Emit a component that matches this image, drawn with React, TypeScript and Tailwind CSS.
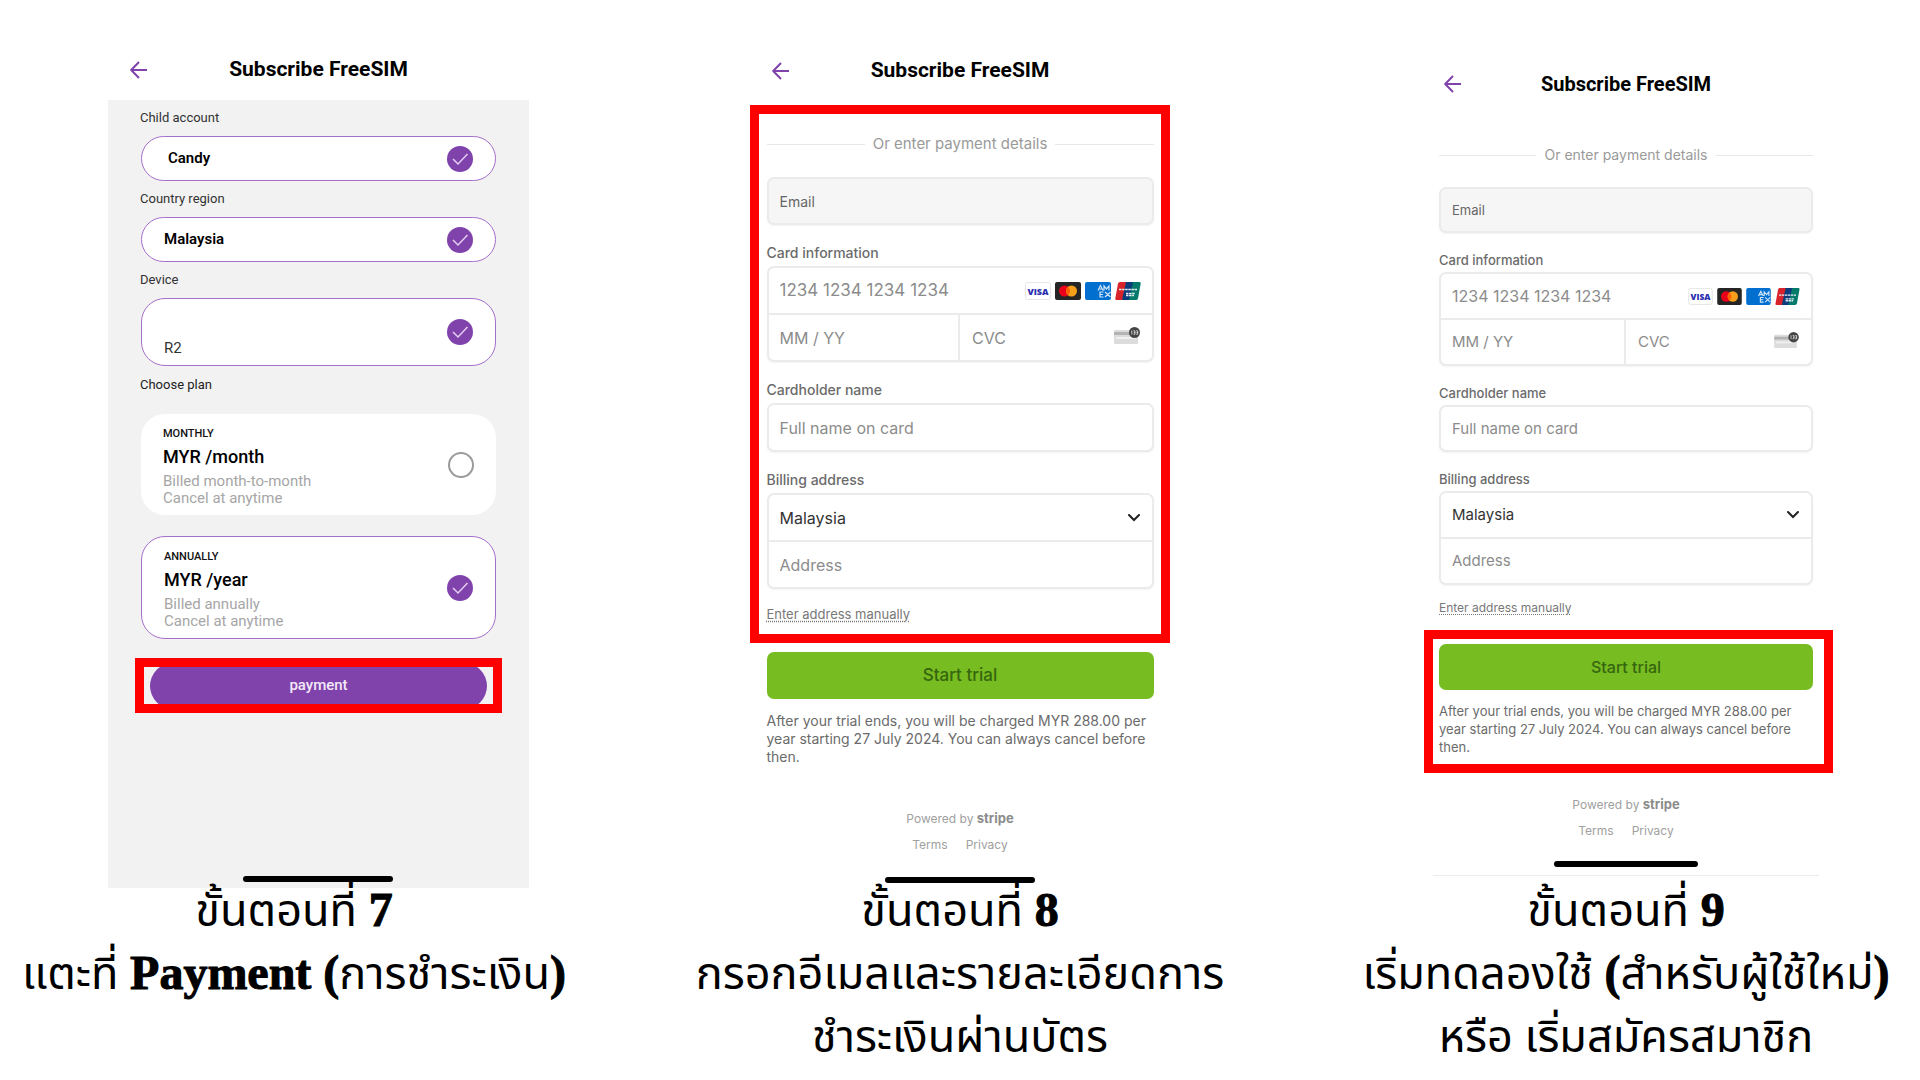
import { useId, type ReactNode } from "react";
import clsx from "clsx";

function BackArrow() {
  return (
    <svg viewBox="0 0 18 18" className="size-[18px]" fill="none" stroke="#8043ab" strokeWidth="2">
      <path d="M17 9H1.5M9 1L1.2 9L9 17" strokeLinejoin="round" />
    </svg>
  );
}

function CheckMark() {
  return (
    <svg viewBox="0 0 26 26" className="size-[26px] shrink-0">
      <circle cx="13" cy="13" r="13" fill="#8043ab" />
      <path d="M6 13L11 18L20.5 8" fill="none" stroke="#e3cdf2" strokeWidth="1.5" />
    </svg>
  );
}

function Chevron() {
  return (
    <svg viewBox="0 0 12 8" className="h-2 w-3" fill="none" stroke="#222" strokeWidth="2">
      <path d="M1 1L6 6L11 1" strokeLinecap="round" />
    </svg>
  );
}

function CardBrands({ small }: { small: boolean }) {
  const size = small ? "h-[17px] w-[25px]" : "h-[18px] w-[26px]";
  return (
    <div className="flex shrink-0 gap-1">
      <svg viewBox="0 0 26 18" className={size}>
        <rect x="0.5" y="0.5" width="25" height="17" rx="2" fill="#fff" stroke="#e6e6e6" />
        <text x="13" y="12.5" textAnchor="middle" fontSize="9" fontWeight="800" fill="#2a2fb0" fontFamily="Open Sans, sans-serif">
          VISA
        </text>
      </svg>
      <svg viewBox="0 0 26 18" className={size}>
        <rect width="26" height="18" rx="2" fill="#252525" />
        <circle cx="9.5" cy="9" r="5.5" fill="#eb001b" />
        <circle cx="16.5" cy="9" r="5.5" fill="#f79e1b" />
        <path d="M13 4.8a5.5 5.5 0 0 1 0 8.4a5.5 5.5 0 0 1 0-8.4" fill="#ff5f00" />
      </svg>
      <svg viewBox="0 0 26 18" className={size}>
        <rect width="26" height="18" rx="2" fill="#016fd0" />
        <path
          d="M13 8.500L15.500 3.500L18 8.500M14 7H17M19 8.500V4L21.500 7L24 4V8.500M18.500 10H15V15H18.500M15 12.500H18M20 10L25.500 15M25.500 10L20 15"
          fill="none"
          stroke="#cfe4f7"
          strokeWidth="1.200"
        />
      </svg>
      <svg viewBox="0 0 26 18" className={size}>
        <path d="M5 0H12L8 18H1.500Q0 18 0.300 16.500L3 1.500Q3.500 0 5 0" fill="#d8232a" />
        <path d="M11 0H19L15 18H7Z" fill="#0c3c7c" />
        <path d="M18 0H24.500Q26 0 25.700 1.500L23 16.500Q22.500 18 21 18H14Z" fill="#047a6b" />
        <path d="M4 7.500H22M11 11.500H20M11 13.500H19" stroke="#e6eef2" strokeWidth="1.500" strokeDasharray="2.500 0.600" />
      </svg>
    </div>
  );
}

function CvcIcon({ small }: { small: boolean }) {
  return (
    <svg viewBox="0 0 26 18" className={clsx("mb-[3px] shrink-0", small ? "h-[17px] w-[25px]" : "h-[18px] w-[26px]")}>
      <rect y="3" width="24" height="14" rx="1" fill="#dcdcdc" />
      <rect y="5" width="24" height="3" fill="#b3b3b3" />
      <rect x="2" y="10" width="20" height="2" fill="#f0f0f0" />
      <circle cx="20.500" cy="5.500" r="5.500" fill="#444" />
      <path d="M17.800 3.500V7.500M19.500 3.800H21V7.200H19.500M21 5.500H19.800M22.200 3.800H23.700V7.200H22.200M23.700 5.500H22.500" fill="none" stroke="#fff" strokeWidth="0.700" />
    </svg>
  );
}

function ScreenHeader({ small = false }: { small?: boolean }) {
  return (
    <header className="grid h-11 grid-cols-[1fr_auto_1fr] items-center font-[Roboto,sans-serif]">
      <button type="button" aria-label="Back" className="justify-self-start">
        <BackArrow />
      </button>
      <h2 className={clsx("font-bold text-black", small ? "text-[20px]" : "text-[21px]")}>Subscribe FreeSIM</h2>
    </header>
  );
}

function HomeBar({ className }: { className: string }) {
  return <div className={clsx("mx-auto h-[6px] rounded-full bg-black", className)} />;
}

interface PickedFieldProps {
  label: string;
  value: string;
  boxClass: string;
  inputClass: string;
}

function PickedField({ label, value, boxClass, inputClass }: PickedFieldProps) {
  const id = useId();
  return (
    <div>
      <label htmlFor={id} className="block text-[13px] leading-5 text-[#333]">
        {label}
      </label>
      <div className={clsx("mt-2 ml-px flex items-center rounded-[24px] border border-[#a56fca] bg-white pr-[22px]", boxClass)}>
        <input id={id} readOnly value={value} className={clsx("min-w-0 flex-1 outline-none", inputClass)} />
        <CheckMark />
      </div>
    </div>
  );
}

interface PlanProps {
  tag: string;
  price: string;
  billing: string;
  selected?: boolean;
}

function Plan({ tag, price, billing, selected = false }: PlanProps) {
  return (
    <label
      className={clsx(
        "ml-px flex items-center rounded-[24px] bg-white pt-[13px] pr-[22px] pb-2 pl-[22px]",
        selected && "border border-[#a56fca]",
      )}
    >
      <span className="flex-1">
        <span className="block text-[11px] leading-[14px] font-medium text-[#111]">{tag}</span>
        <span className="block text-[18px] leading-8 font-medium text-black">{price}</span>
        <span className="block text-[15px] leading-[17px] text-[#a6a6a6]">{billing}</span>
        <span className="block text-[15px] leading-[17px] text-[#a6a6a6]">Cancel at anytime</span>
      </span>
      <input type="radio" name="plan" defaultChecked={selected} className="peer sr-only" />
      <span className="mb-[5px] size-[26px] rounded-full border-2 border-[#9b9b9b] peer-checked:hidden" />
      <span className="mb-[5px] hidden peer-checked:block">
        <CheckMark />
      </span>
    </label>
  );
}

function PlanScreen() {
  return (
    <section className="ml-[86px] w-[421px] max-w-full pt-[48px] font-[Roboto,sans-serif]">
      <div className="px-[22px]">
        <ScreenHeader />
      </div>
      <div className="mt-2 bg-[#f2f2f2] pt-2 pr-[33px] pb-[6px] pl-8">
        <div className="flex flex-col gap-2">
          <PickedField label="Child account" value="Candy" boxClass="h-[45px]" inputClass="pl-[26px] text-[15px] font-semibold" />
          <PickedField label="Country region" value="Malaysia" boxClass="h-[45px]" inputClass="pl-[22px] text-[15px] font-semibold" />
          <PickedField label="Device" value="R2" boxClass="h-[68px]" inputClass="pt-8 pl-[22px] text-[15px] text-[#333]" />
        </div>
        <h3 className="mt-[9px] text-[13px] leading-5 text-[#222]">Choose plan</h3>
        <div className="mt-[19px] flex flex-col gap-[21px]">
          <Plan tag="MONTHLY" price="MYR /month" billing="Billed month-to-month" />
          <Plan tag="ANNUALLY" price="MYR /year" billing="Billed annually" selected />
        </div>
        <div className="-mr-[6px] -ml-[5px] mt-[19px] flex h-[55px] items-center overflow-hidden border-[9px] border-[#ff0000] px-[6px]">
          <button type="button" className="h-[46px] w-full shrink-0 rounded-full bg-[#8043ab] text-[15px] font-medium text-[#f3e9fa]">
            payment
          </button>
        </div>
        <HomeBar className="mt-[163px] w-[150px]" />
      </div>
    </section>
  );
}

const FIELD = "w-full min-w-0 flex-1 bg-transparent outline-none placeholder:text-[#8c8c8c]";
const BOX = "border-2 border-[#ebebeb] bg-white shadow-xs";

function Highlight({ className }: { className: string }) {
  return <div className={clsx("pointer-events-none absolute border-[9px] border-[#ff0000]", className)} />;
}

interface CheckoutScreenProps {
  small?: boolean;
  highlight: "form" | "submit";
}

function CheckoutScreen({ small = false, highlight }: CheckoutScreenProps) {
  const id = useId();
  const label = clsx("block leading-5 font-medium text-[#6b6b6b]", small ? "mt-[17px] text-[13px]" : "mt-[18px] text-[14px]");
  const group = clsx("flex flex-col rounded-[7px]", BOX, small ? "mt-[2px] h-[94px] text-[15px]" : "mt-[3px] h-24 text-[16px]");
  const width = small ? "w-[374px] pt-[62px]" : "w-[387px] pt-[49px]";

  return (
    <section className={clsx("mx-auto max-w-full font-[Inter,sans-serif] text-[#6b6b6b]", width)}>
      <div className="px-[5px]">
        <ScreenHeader small={small} />
      </div>

      <div className={clsx("relative", small ? "mt-[39px]" : "mt-[41px]")}>
        {highlight === "form" && <Highlight className="-top-[29px] -right-[16px] -bottom-[19px] -left-[17px]" />}
        <div className={clsx("flex items-center gap-2 leading-5 text-[#9a9a9a]", small ? "text-[14px]" : "text-[15px]")}>
          <hr className="flex-1 border-[#e8e8e8]" />
          Or enter payment details
          <hr className="flex-1 border-[#e8e8e8]" />
        </div>

        <input
          type="email"
          aria-label="Email"
          placeholder="Email"
          className={clsx(
            "block w-full rounded-[7px] border-2 border-[#ebebeb] bg-[#f6f6f6] px-[11px] shadow-xs outline-none placeholder:text-[#666]",
            small ? "mt-[22px] h-[46px] text-[13px]" : "mt-[23px] h-12 text-[14px]",
          )}
        />

        <label htmlFor={`${id}-card`} className={label}>
          Card information
        </label>
        <div className={group}>
          <div className="flex flex-1 items-center border-b-2 border-[#ebebeb] px-[11px]">
            <input id={`${id}-card`} placeholder="1234 1234 1234 1234" className={clsx(FIELD, small ? "text-[16px]" : "text-[17px]")} />
            <CardBrands small={small} />
          </div>
          <div className="grid flex-1 grid-cols-2">
            <div className="flex items-center border-r-2 border-[#ebebeb] px-[11px]">
              <input aria-label="Expiry date" placeholder="MM / YY" className={FIELD} />
            </div>
            <div className="flex items-center px-3">
              <input aria-label="CVC" placeholder="CVC" className={FIELD} />
              <CvcIcon small={small} />
            </div>
          </div>
        </div>

        <label htmlFor={`${id}-name`} className={label}>
          Cardholder name
        </label>
        <input
          id={`${id}-name`}
          placeholder="Full name on card"
          className={clsx(
            "block w-full rounded-[7px] px-[11px] outline-none placeholder:text-[#8c8c8c]",
            BOX,
            small ? "mt-[2px] h-[47px] text-[15px]" : "mt-[3px] h-[49px] text-[16px]",
          )}
        />

        <label htmlFor={`${id}-country`} className={label}>
          Billing address
        </label>
        <div className={group}>
          <div className="relative flex flex-1 items-center border-b-2 border-[#ebebeb] px-[11px]">
            <select id={`${id}-country`} className="flex-1 appearance-none bg-transparent text-[#333] outline-none">
              <option>Malaysia</option>
            </select>
            <span className="pointer-events-none absolute right-3">
              <Chevron />
            </span>
          </div>
          <div className="flex flex-1 items-center px-[11px]">
            <input aria-label="Address" placeholder="Address" className={FIELD} />
          </div>
        </div>

        <a
          href="#manual"
          className={clsx(
            "block w-fit leading-5 text-[#777] underline decoration-dotted underline-offset-2",
            small ? "mt-[13px] text-[12px]" : "mt-[15px] text-[13px]",
          )}
        >
          Enter address manually
        </a>
      </div>

      <div className={clsx("relative", small ? "mt-[26px]" : "mt-7")}>
        {highlight === "submit" && <Highlight className="-top-[14px] -right-[20px] -bottom-[17px] -left-[15px]" />}
        <button
          type="button"
          className={clsx("block w-full rounded-[7px] bg-[#77bc21] font-medium text-[#36660f]", small ? "h-[46px] text-[16px]" : "h-[47px] text-[17px]")}
        >
          Start trial
        </button>
        <p className={clsx("leading-[18px]", small ? "mt-3 text-[13px]" : "mt-[13px] text-[14px]")}>
          After your trial ends, you will be charged MYR 288.00 per year starting 27 July 2024. You can always cancel before then.
        </p>
      </div>

      <footer className={clsx("text-center text-[12px] leading-5 text-[#a0a0a0]", small ? "mt-[38px]" : "mt-[42px]")}>
        <p>
          Powered by <b className="text-[13px] font-bold text-[#8c8c8c]">stripe</b>
        </p>
        <nav className="mt-[6px] flex justify-center gap-[18px]">
          <a href="#terms">Terms</a>
          <a href="#privacy">Privacy</a>
        </nav>
      </footer>
      <HomeBar className={small ? "mt-5 w-[144px]" : "mt-[22px] w-[150px]"} />
      {small && <hr className="-mx-[6px] mt-2 border-[#ececec]" />}
    </section>
  );
}

function Serif({ children }: { children: ReactNode }) {
  return <span className="font-['Liberation_Serif',serif] text-[48px] leading-none font-bold [-webkit-text-stroke:1px_black]">{children}</span>;
}

export default function App() {
  return (
    <main className="min-h-screen overflow-hidden bg-white">
      <div className="grid grid-cols-3 gap-x-[122px] px-[22px]">
        <PlanScreen />
        <CheckoutScreen highlight="form" />
        <CheckoutScreen small highlight="submit" />
      </div>

      <div className="relative -mt-[7px] grid grid-cols-3 gap-x-[122px] px-[22px] text-center font-['Noto_Sans_Thai','Noto_Sans',sans-serif] text-[45px] leading-[63px] whitespace-nowrap text-black">
        <p>
          ขั้นตอนที่ <Serif>7</Serif>
          <br />
          แตะที่ <Serif>Payment (</Serif>การชำระเงิน<Serif>)</Serif>
        </p>
        <p>
          ขั้นตอนที่ <Serif>8</Serif>
          <br />
          กรอกอีเมลและรายละเอียดการ
          <br />
          ชำระเงินผ่านบัตร
        </p>
        <p>
          ขั้นตอนที่ <Serif>9</Serif>
          <br />
          เริ่มทดลองใช้ <Serif>(</Serif>สำหรับผู้ใช้ใหม่<Serif>)</Serif>
          <br />
          หรือ เริ่มสมัครสมาชิก
        </p>
      </div>
    </main>
  );
}
